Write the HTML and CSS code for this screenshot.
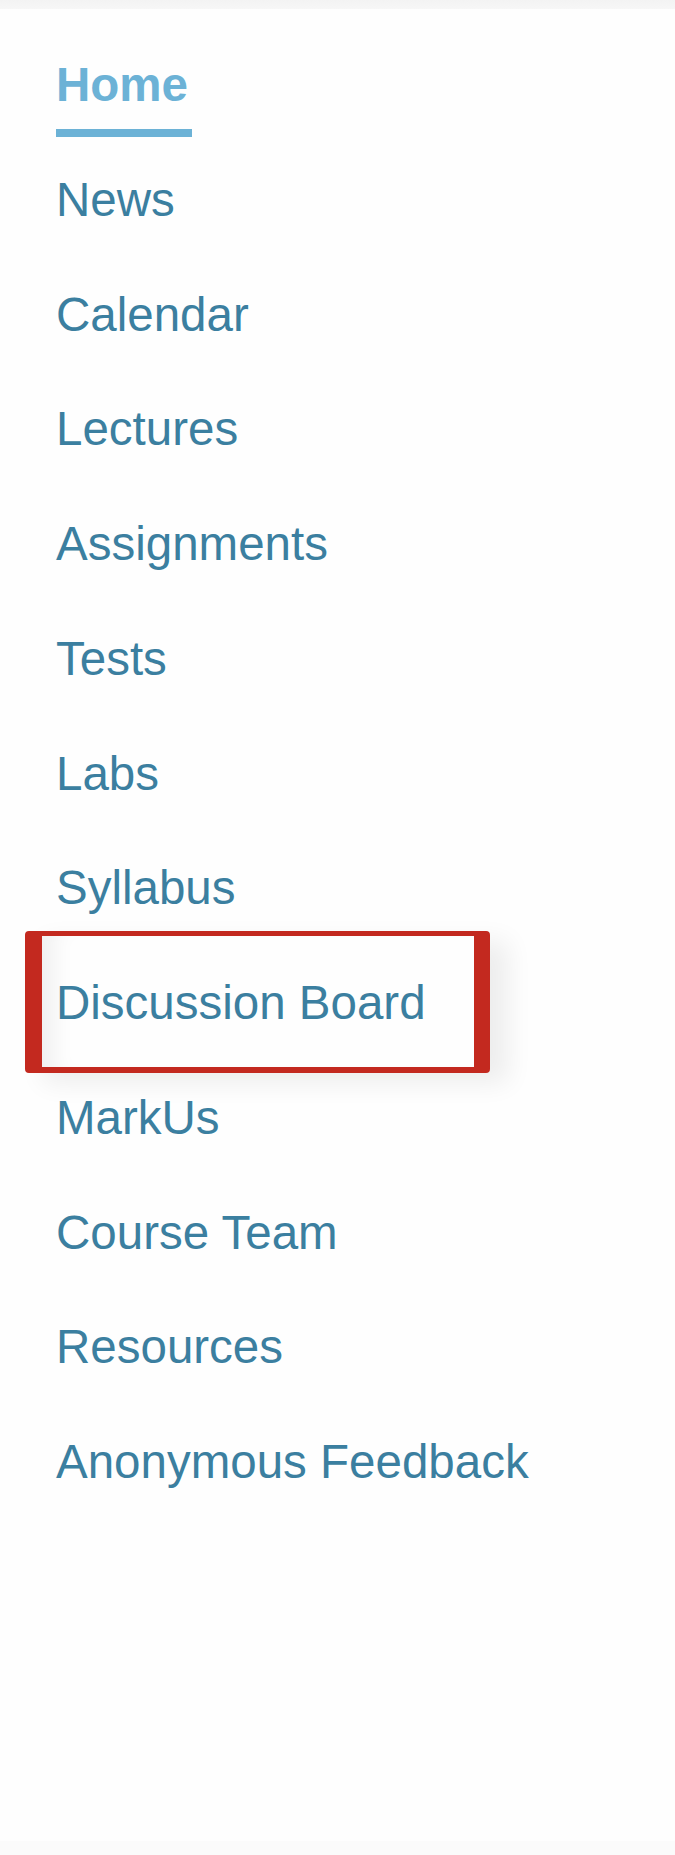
FILE: index.html
```html
<!DOCTYPE html>
<html lang="en">
<head>
<meta charset="utf-8">
<title>Course navigation</title>
<link rel="stylesheet" href="styles.css">
</head>
<body>
<div class="topbar"></div>
<nav class="sidenav">
  <ul class="menu">
    <li class="item"><a class="link active" href="#">Home</a></li>
    <li class="item"><a class="link" href="#">News</a></li>
    <li class="item"><a class="link" href="#">Calendar</a></li>
    <li class="item"><a class="link" href="#">Lectures</a></li>
    <li class="item"><a class="link" href="#">Assignments</a></li>
    <li class="item"><a class="link" href="#">Tests</a></li>
    <li class="item"><a class="link" href="#">Labs</a></li>
    <li class="item"><a class="link" href="#">Syllabus</a></li>
    <li class="item highlighted"><a class="link" href="#">Discussion Board</a><span class="callout"></span></li>
    <li class="item"><a class="link" href="#">MarkUs</a></li>
    <li class="item"><a class="link" href="#">Course Team</a></li>
    <li class="item"><a class="link" href="#">Resources</a></li>
    <li class="item"><a class="link" href="#">Anonymous Feedback</a></li>
  </ul>
</nav>
<div class="bottombar"></div>
</body>
</html>
```
FILE: styles.css
```css
html, body {
  margin: 0;
  padding: 0;
  background: #fefefe;
  height: 1855px;
  overflow: hidden;
}
body {
  font-family: "Liberation Sans", Arial, sans-serif;
  display: flex;
  flex-direction: column;
}
.topbar {
  height: 9px;
  background: linear-gradient(#f3f3f3, #f7f7f7);
  flex: none;
}
.sidenav {
  flex: 1;
  padding-top: 19px;
}
.menu {
  list-style: none;
  margin: 0;
  padding: 0 0 0 56px;
}
.item {
  position: relative;
  height: 114.75px;
  line-height: 114.75px;
  font-size: 47.5px;
}
.link {
  color: #3b7fa0;
  text-decoration: none;
}
.link.active {
  display: inline-block;
  line-height: 54px;
  font-weight: bold;
  color: #6cb2d6;
  padding: 0 4px 17px 0;
  border-bottom: 8px solid #6cb2d6;
  vertical-align: baseline;
}
.callout {
  position: absolute;
  left: -31px;
  top: -15px;
  width: 465px;
  height: 142px;
  box-sizing: border-box;
  border-style: solid;
  border-color: #c3291f;
  border-width: 5px 16px 6px 17px;
  border-radius: 4px;
  box-shadow: 18px 10px 26px rgba(0, 0, 0, 0.07), inset 26px 0 22px -14px rgba(0, 0, 0, 0.06);
  pointer-events: none;
}
.bottombar {
  height: 14px;
  background: #fbfbfb;
  flex: none;
}
```
